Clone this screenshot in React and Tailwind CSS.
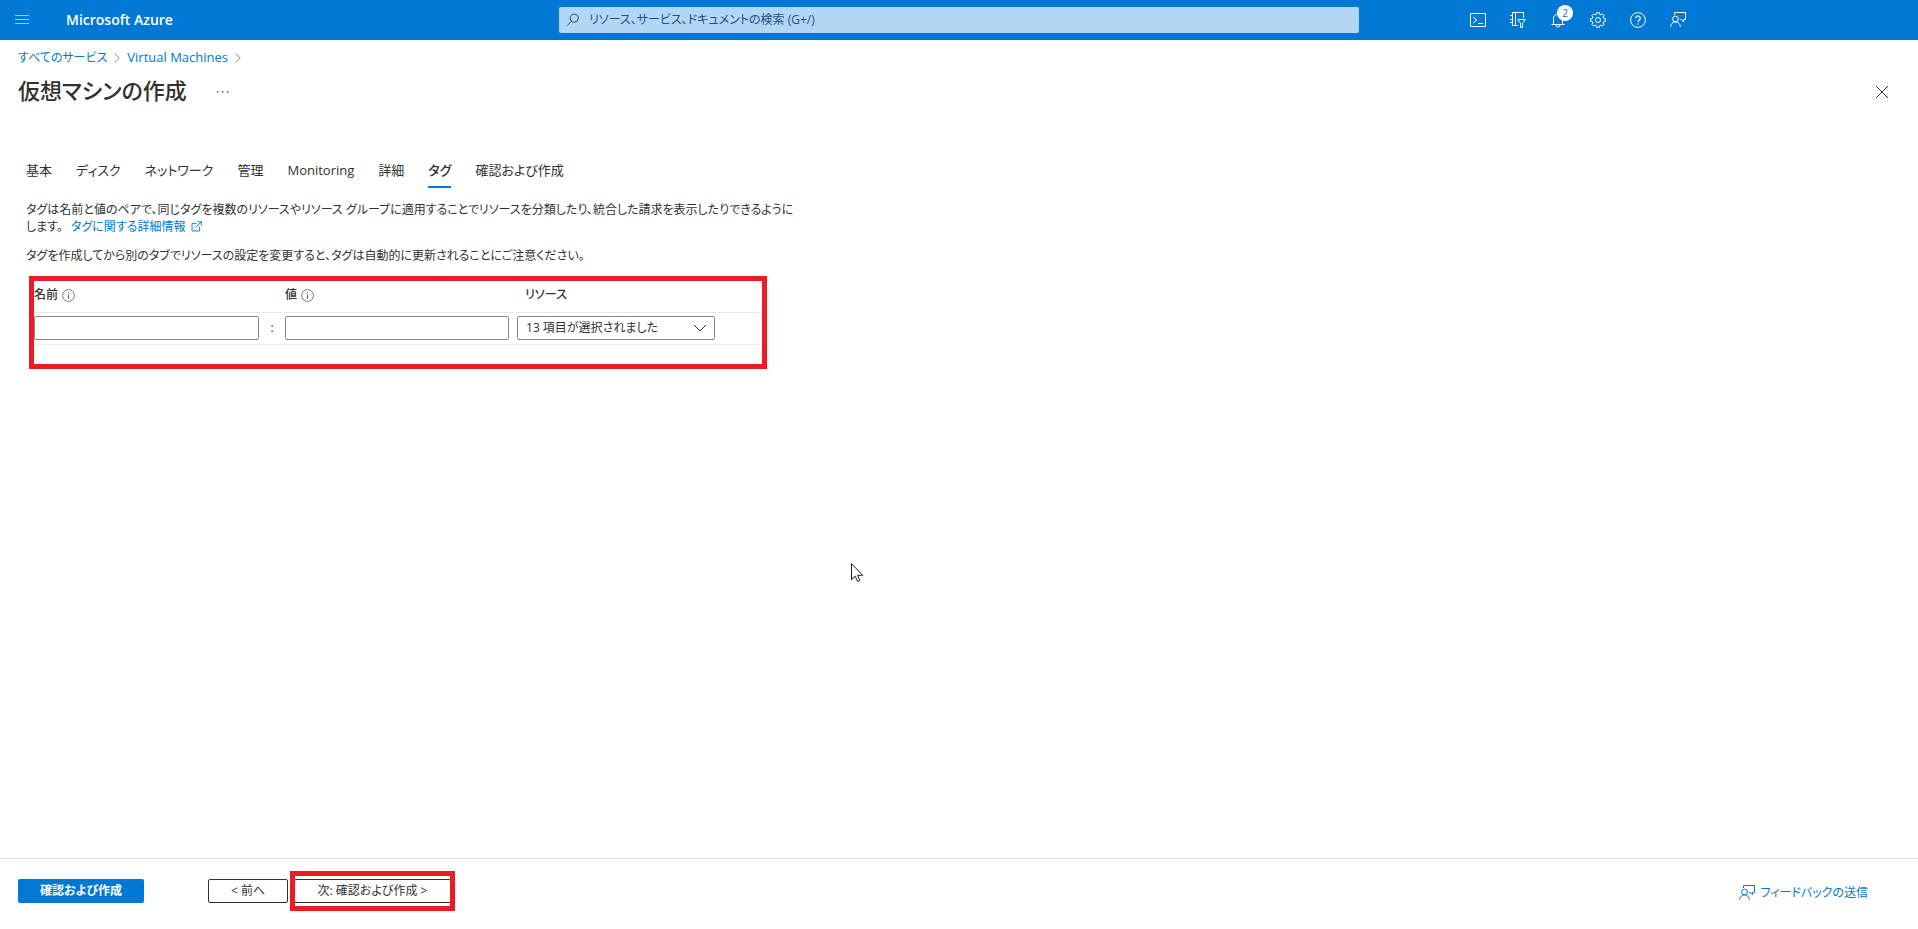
import React, { useState } from 'react';

const TABS = [
  { id: 'basics', label: '基本' },
  { id: 'disks', label: 'ディスク' },
  { id: 'network', label: 'ネットワーク' },
  { id: 'management', label: '管理' },
  { id: 'monitoring', label: 'Monitoring' },
  { id: 'advanced', label: '詳細' },
  { id: 'tags', label: 'タグ' },
  { id: 'review', label: '確認および作成' },
];

// -----------------------------
//   ICONS
// -----------------------------
function Icon({ children, className = 'size-4' }) {
  return (
    <svg
      viewBox="0 0 16 16"
      className={className}
      fill="none"
      stroke="currentColor"
      strokeWidth="1"
      aria-hidden="true"
    >
      {children}
    </svg>
  );
}

const MenuIcon = () => (
  <Icon className="size-4 text-white/60">
    <path d="M1 3.5h14M1 7.5h14M1 11.5h14" />
  </Icon>
);

const SearchIcon = () => (
  <Icon className="size-4 shrink-0 text-[#1f4f86]">
    <circle cx="9.3" cy="6.2" r="4" />
    <path d="M6.5 9.2L2 13.7" />
  </Icon>
);

const ShellIcon = () => (
  <Icon>
    <path d="M.5 1.5h15v13H.5zM3 5l4 3-4 3M8 11.5h5" />
  </Icon>
);

const DirectoryIcon = () => (
  <Icon>
    <path d="M8 13.5H2.5V.5h11V6M5.5.5v13M0 3.5h2.5M0 7.5h2.5M0 10.5h2.5" />
    <path d="M7.7 7.5h7.8l-3 3.7v4.3h-2v-4.3z" />
  </Icon>
);

const BellIcon = () => (
  <Icon>
    <path d="M1.5 12.5h13M3.5 12.5v-6a4.5 4.5 0 0 1 9 0v6M6 13a2 2 0 0 0 4 0" />
  </Icon>
);

// eight teeth around the hub
const gearPath =
  [...Array(8)]
    .flatMap((_, i) =>
      [[5.9, -14], [7.5, -10], [7.5, 10], [5.9, 14]].map(([r, deg]) => {
        const a = ((i * 45 + deg) * Math.PI) / 180;
        return `${(8 + r * Math.cos(a)).toFixed(2)} ${(8 + r * Math.sin(a)).toFixed(2)}`;
      })
    )
    .reduce((d, p, i) => d + (i ? 'L' : 'M') + p, '') + 'Z';

const GearIcon = () => (
  <Icon>
    <path d={gearPath} />
    <circle cx="8" cy="8" r="2.5" />
  </Icon>
);

const HelpIcon = () => (
  <Icon>
    <circle cx="8" cy="8" r="7.4" />
    <path d="M5.7 6.2a2.3 2.3 0 1 1 3.6 1.9c-.8.6-1.3 1-1.3 2.2M8 11.4v1.4" strokeWidth="1.2" />
  </Icon>
);

const FeedbackIcon = () => (
  <Icon>
    <circle cx="5.5" cy="7" r="2.9" />
    <path d="M.6 14.8a4.9 4.9 0 0 1 9.8 0" />
    <path d="M4.5 3V.5h11v7h-2v2.3L11.2 7.5H10" />
  </Icon>
);

const InfoIcon = () => (
  <Icon className="size-[13px] text-[#605e5c]">
    <circle cx="8" cy="8" r="7.3" />
    <path d="M8 4v1.6M8 7v5" strokeWidth="1.4" />
  </Icon>
);

const ExternalIcon = () => (
  <Icon className="ml-0.5 inline size-[11px] align-[-1px]">
    <path d="M8 3.5H1.5v11h11V8M9.5 1h5.5v5.5M15 1L6.5 9.5" strokeWidth="1.3" />
  </Icon>
);

const MoreIcon = () => (
  <svg viewBox="0 0 12 2" className="h-0.5 w-3" fill="#605e5c" aria-hidden="true">
    <path d="M0 0h1.5v1.5H0zM5 0h1.5v1.5H5zM10 0h1.5v1.5H10z" />
  </svg>
);

const Chevron = () => (
  <Icon className="size-3 text-[#605e5c]">
    <path d="M5 2l6 6-6 6" />
  </Icon>
);

const Cursor = () => (
  <svg
    viewBox="0 0 14 20"
    className="pointer-events-none absolute left-[851px] top-[563px] h-5 w-3.5"
    aria-hidden="true"
  >
    <path
      d="M.5.7v16l3.7-3.5 2.4 5.3 2.3-1-2.4-5.2h5.2z"
      fill="white"
      stroke="#1a1a2e"
    />
  </svg>
);

// -----------------------------
//   HEADER
// -----------------------------
function TopBar() {
  const actions = [
    { label: 'Cloud Shell', icon: <ShellIcon /> },
    { label: 'ディレクトリ', icon: <DirectoryIcon /> },
    { label: '通知', icon: <BellIcon />, badge: 2 },
    { label: '設定', icon: <GearIcon /> },
    { label: 'ヘルプ', icon: <HelpIcon /> },
    { label: 'フィードバック', icon: <FeedbackIcon /> },
  ];

  return (
    <header className="grid h-10 grid-cols-[1fr_minmax(0,800px)_1fr] items-center bg-[#0078d4] text-white">
      <div className="flex items-center gap-7 pl-3.5">
        <button type="button" aria-label="メニュー">
          <MenuIcon />
        </button>
        <a href="#home" className="pl-2 text-sm font-semibold">
          Microsoft Azure
        </a>
      </div>

      <label className="flex h-[26px] items-center gap-2 rounded-xs bg-[#b3d6f2] px-1.5">
        <SearchIcon />
        <input
          type="search"
          aria-label="検索"
          placeholder="リソース、サービス、ドキュメントの検索 (G+/)"
          className="w-full bg-transparent text-xs text-[#1f4f86] outline-none placeholder:text-[#1f4f86]"
        />
      </label>

      <div className="flex justify-end pr-[220px]">
        {actions.map((a) => (
          <button
            key={a.label}
            type="button"
            aria-label={a.label}
            className="relative flex h-10 w-10 items-center justify-center"
          >
            {a.icon}
            {a.badge && (
              <span className="absolute right-[5px] top-[5px] flex size-4 items-center justify-center rounded-full bg-white text-[10px] text-[#0078d4]">
                {a.badge}
              </span>
            )}
          </button>
        ))}
      </div>
    </header>
  );
}

// -----------------------------
//   TAG TABLE
// -----------------------------
function TagTable() {
  const [name, setName] = useState('');
  const [value, setValue] = useState('');
  const field = 'block h-6 w-full rounded-xs border border-[#8a8886] px-2 outline-none';

  return (
    <div className="relative mt-3 h-[93px] max-w-[737px] pt-[3px]">
      <table className="w-full table-fixed border-collapse text-left text-xs">
        <colgroup>
          <col className="w-[233px]" />
          <col className="w-[26px]" />
          <col className="w-[232px]" />
          <col />
        </colgroup>
        <thead>
          <tr className="h-[33px] border-b border-[#e8e8e8]">
            <th className="pl-2 font-medium" colSpan={2}>
              <span className="flex items-center gap-1">
                名前 <InfoIcon />
              </span>
            </th>
            <th className="font-medium">
              <span className="flex items-center gap-1">
                値 <InfoIcon />
              </span>
            </th>
            <th className="pl-2 font-medium">リソース</th>
          </tr>
        </thead>
        <tbody>
          <tr className="h-8 border-b border-[#f0f0f0]">
            <td className="pl-2">
              <input
                aria-label="名前"
                value={name}
                onChange={(e) => setName(e.target.value)}
                className={field}
              />
            </td>
            <td className="text-center">:</td>
            <td className="pr-2">
              <input
                aria-label="値"
                value={value}
                onChange={(e) => setValue(e.target.value)}
                className={field}
              />
            </td>
            <td>
              <div className="relative w-[198px]">
                <select
                  aria-label="リソース"
                  className="block h-6 w-full appearance-none rounded-xs border border-[#8a8886] bg-white pl-2 pr-6 text-[#323130] outline-none"
                >
                  <option>13 項目が選択されました</option>
                </select>
                <svg
                  viewBox="0 0 14 8"
                  className="pointer-events-none absolute right-2 top-2 h-2 w-3.5"
                  fill="none"
                  stroke="#323130"
                  aria-hidden="true"
                >
                  <path d="M1 1l6 6 6-6" />
                </svg>
              </div>
            </td>
          </tr>
        </tbody>
      </table>
      <div className="pointer-events-none absolute inset-y-0 -right-1 left-[3px] border-5 border-[#ed1c24]" />
    </div>
  );
}

// -----------------------------
//   PAGE
// -----------------------------
export default function App() {
  const [tab, setTab] = useState('tags');

  return (
    <div className="relative flex min-h-screen flex-col bg-white font-['Open_Sans','Noto_Sans_CJK_JP',sans-serif] text-[13px] text-[#323130] [font-feature-settings:'palt']">
      <TopBar />

      <nav className="flex h-9 items-center gap-1 px-[18px] text-[#0078d4]">
        <a href="#services" className="text-xs">
          すべてのサービス
        </a>
        <Chevron />
        <a href="#vms">Virtual Machines</a>
        <Chevron />
      </nav>

      <div className="flex h-8 items-center px-[18px]">
        <h1 className="pb-1 text-[22px] font-medium">仮想マシンの作成</h1>
        <button type="button" aria-label="その他" className="ml-[30px] py-2">
          <MoreIcon />
        </button>
        <button type="button" aria-label="閉じる" className="ml-auto mr-3">
          <svg viewBox="0 0 12 12" className="size-3" fill="none" stroke="#323130" aria-hidden="true">
            <path d="M0 0l12 12M12 0L0 12" />
          </svg>
        </button>
      </div>

      <main className="flex-1 px-[26px] pt-11">
        <div role="tablist" className="flex gap-6">
          {TABS.map((t) => (
            <button
              key={t.id}
              type="button"
              role="tab"
              aria-selected={tab === t.id}
              onClick={() => setTab(t.id)}
              className={`h-9 border-b-2 pt-1 ${
                tab === t.id ? 'border-[#0078d4] font-medium' : 'border-transparent'
              }`}
            >
              {t.label}
            </button>
          ))}
        </div>

        <div className="max-w-[770px] pt-[13px] text-xs leading-[17px]">
          <p>
            タグは名前と値のペアで、同じタグを複数のリソースやリソース グループに適用することでリソースを分類したり、統合した請求を表示したりできるようにします。
            <a href="#tags-info" className="ml-2 text-[#0078d4]">
              タグに関する詳細情報 <ExternalIcon />
            </a>
          </p>
          <p className="mt-3">
            タグを作成してから別のタブでリソースの設定を変更すると、タグは自動的に更新されることにご注意ください。
          </p>
          <TagTable />
        </div>
      </main>

      <footer className="flex h-[71px] items-start border-t border-[#e1dfdd] pl-[18px] pr-[50px] pt-5 text-xs">
        <button type="button" className="h-6 w-[126px] rounded-xs bg-[#0078d4] font-semibold text-white">
          確認および作成
        </button>
        <button type="button" className="ml-16 h-6 w-20 rounded-xs border border-[#323130]">
          &lt; 前へ
        </button>
        <div className="relative ml-1.5">
          <button type="button" className="h-6 w-[157px] rounded-xs border border-[#323130]">
            次: 確認および作成 &gt;
          </button>
          <div className="pointer-events-none absolute -inset-x-1 -inset-y-2 border-5 border-[#ed1c24]" />
        </div>
        <a href="#feedback" className="ml-auto flex items-center gap-1.5 pt-1.5 text-[#0078d4]">
          <FeedbackIcon />
          フィードバックの送信
        </a>
      </footer>

      <Cursor />
    </div>
  );
}
